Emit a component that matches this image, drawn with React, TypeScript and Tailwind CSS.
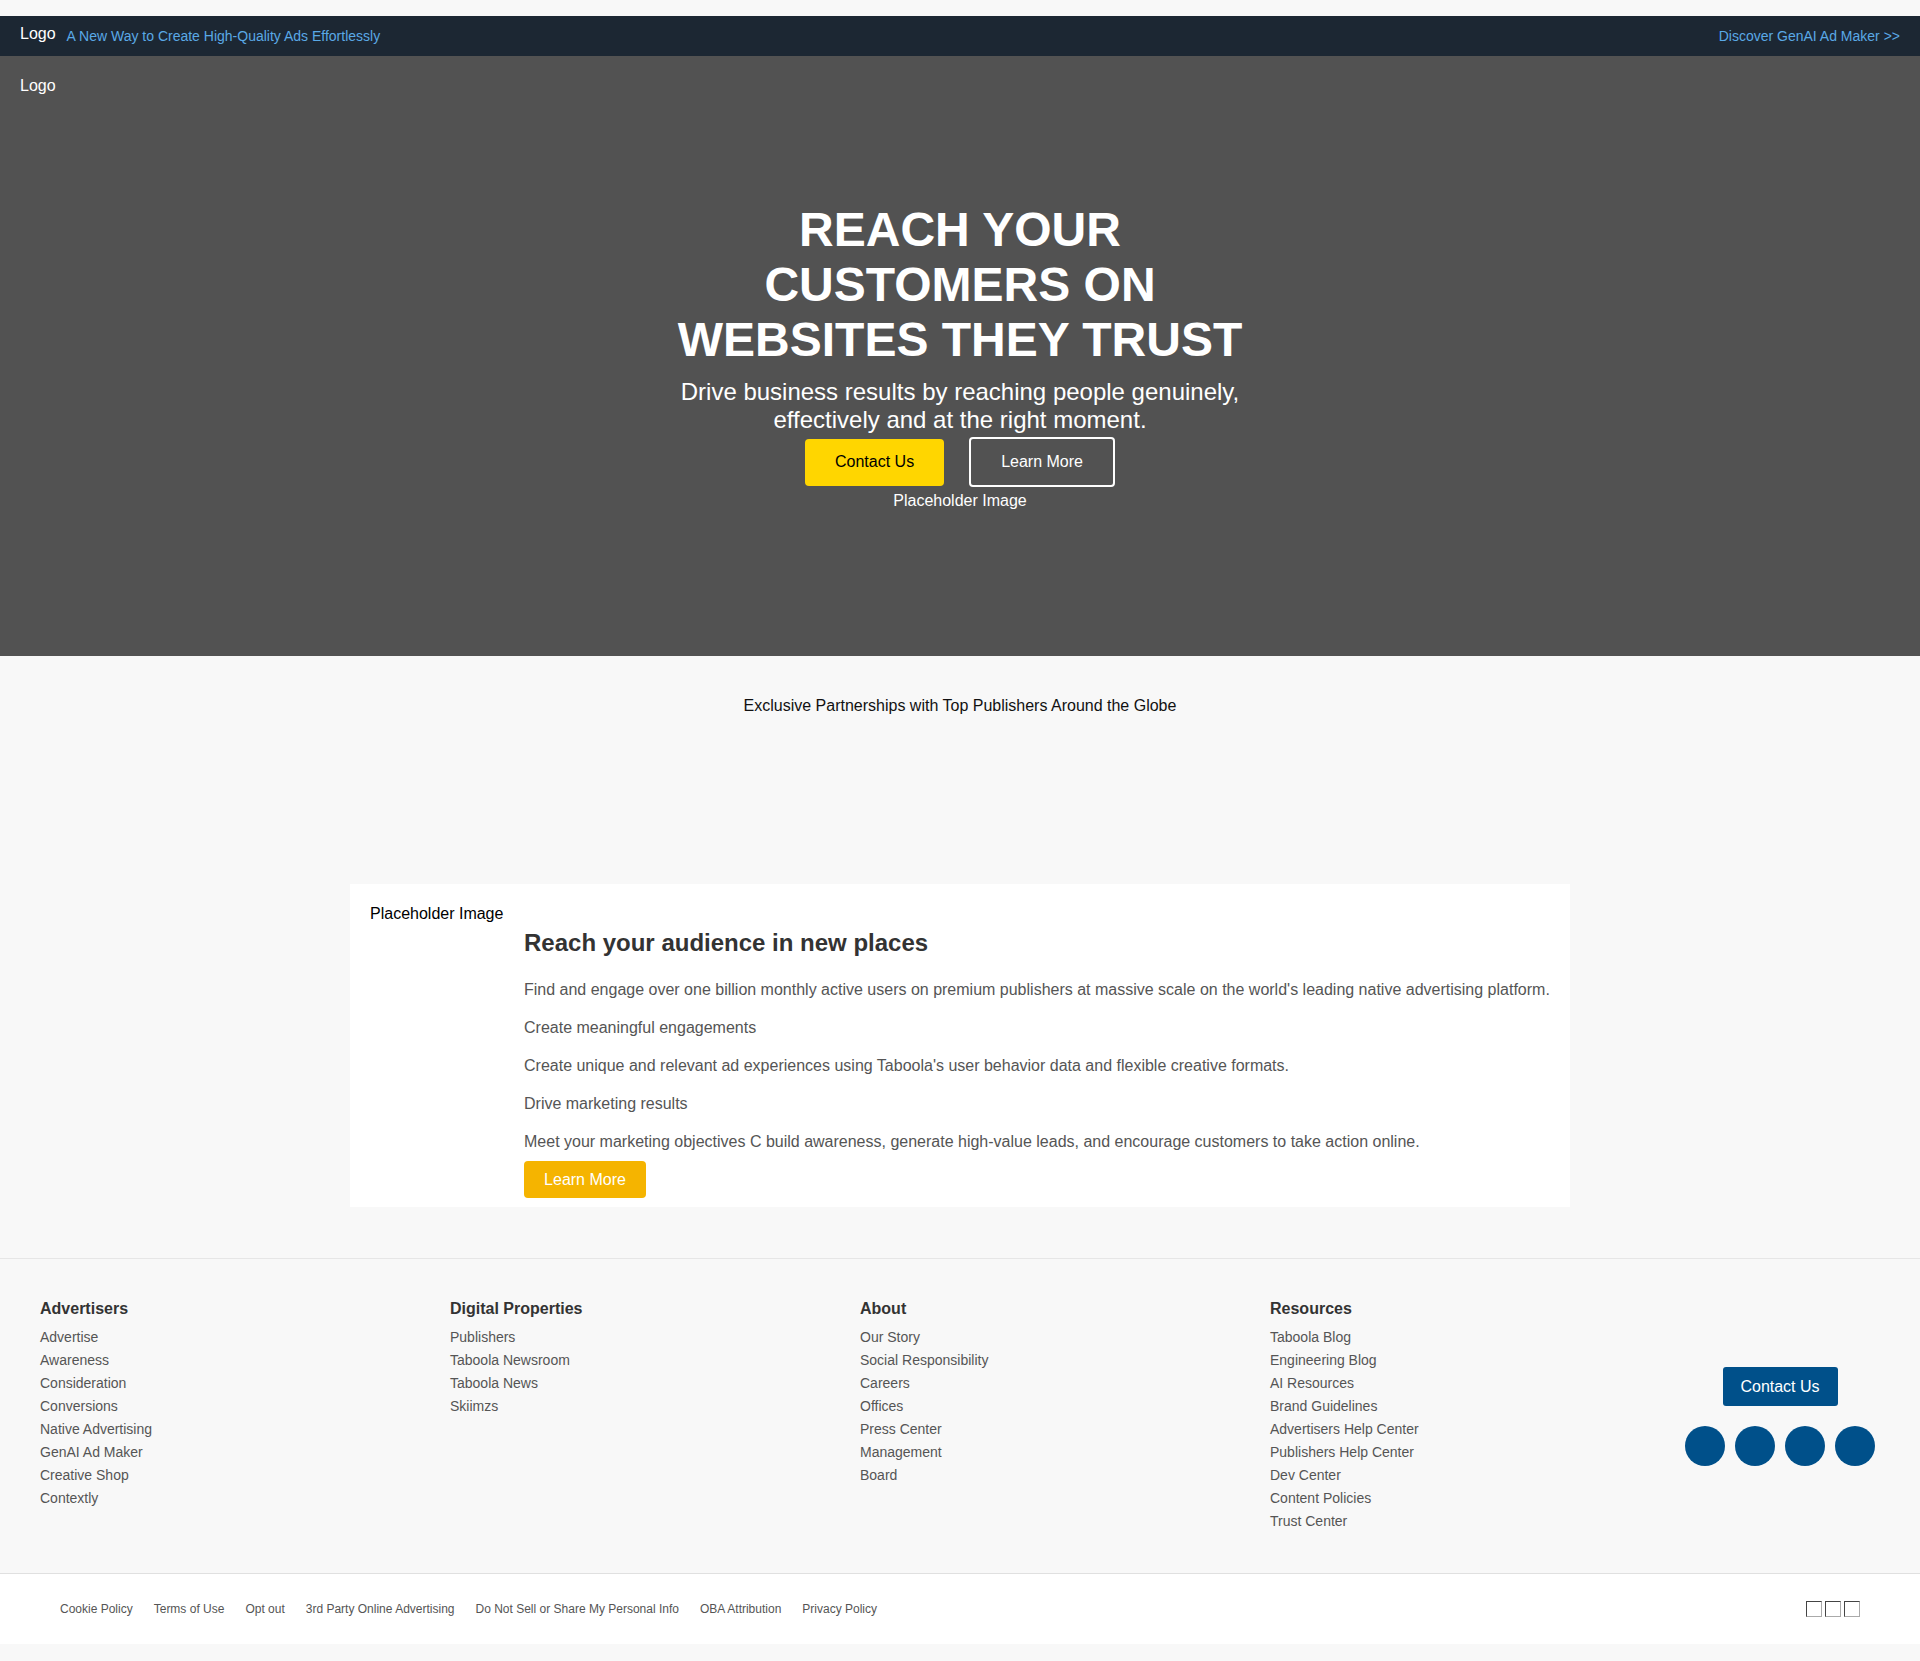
import React from 'react';

const footerColumns = [
  {
    title: 'Advertisers',
    links: ['Advertise', 'Awareness', 'Consideration', 'Conversions', 'Native Advertising', 'GenAI Ad Maker', 'Creative Shop', 'Contextly'],
  },
  {
    title: 'Digital Properties',
    links: ['Publishers', 'Taboola Newsroom', 'Taboola News', 'Skiimzs'],
  },
  {
    title: 'About',
    links: ['Our Story', 'Social Responsibility', 'Careers', 'Offices', 'Press Center', 'Management', 'Board'],
  },
  {
    title: 'Resources',
    links: [
      'Taboola Blog',
      'Engineering Blog',
      'AI Resources',
      'Brand Guidelines',
      'Advertisers Help Center',
      'Publishers Help Center',
      'Dev Center',
      'Content Policies',
      'Trust Center',
    ],
  },
];

const legalLinks = [
  'Cookie Policy',
  'Terms of Use',
  'Opt out',
  '3rd Party Online Advertising',
  'Do Not Sell or Share My Personal Info',
  'OBA Attribution',
  'Privacy Policy',
];

const cardParagraphs = [
  "Find and engage over one billion monthly active users on premium publishers at massive scale on the world's leading native advertising platform.",
  'Create meaningful engagements',
  "Create unique and relevant ad experiences using Taboola's user behavior data and flexible creative formats.",
  'Drive marketing results',
  'Meet your marketing objectives C build awareness, generate high-value leads, and encourage customers to take action online.',
];

export default function App() {
  return (
    <div className="min-h-screen bg-[#f8f8f8] pt-[16px] pb-[16px] font-['Liberation_Sans',Arial,sans-serif]">
      {/* Announcement bar */}
      <div className="h-[40px] bg-[#1c2733] px-[20px] flex items-center justify-between">
        <div className="flex items-center gap-[11px]">
          <span className="text-[16px] text-white -mt-[5px]">Logo</span>
          <a href="#" className="text-[14px] text-[#5aa9e6]">A New Way to Create High-Quality Ads Effortlessly</a>
        </div>
        <a href="#" className="text-[14px] text-[#5aa9e6]">Discover GenAI Ad Maker &gt;&gt;</a>
      </div>

      {/* Hero */}
      <section className="relative h-[600px] bg-[#525252] flex items-center justify-center">
        <header className="absolute top-0 left-0 right-0 px-[20px] pt-[18px]">
          <span className="text-[16px] leading-[18px] text-white">Logo</span>
        </header>
        <div className="max-w-[600px] flex flex-col items-center text-center">
          <h1 className="text-[48px] leading-[55px] font-bold text-white">REACH YOUR CUSTOMERS ON WEBSITES THEY TRUST</h1>
          <p className="mt-[11px] text-[24px] leading-[28px] text-white">
            Drive business results by reaching people genuinely, effectively and at the right moment.
          </p>
          <div className="mt-[3px] flex items-center gap-[25px]">
            <a href="#" className="h-[47px] px-[30px] flex items-center rounded-[4px] bg-[#ffd600] text-[16px] text-black">
              Contact Us
            </a>
            <a href="#" className="h-[50px] px-[30px] flex items-center rounded-[4px] border-2 border-white text-[16px] text-white">
              Learn More
            </a>
          </div>
          <div className="mt-[5px] text-[16px] leading-[18px] text-white">Placeholder Image</div>
        </div>
      </section>

      {/* Partners */}
      <section className="pt-[41px] text-center">
        <p className="text-[16px] leading-[18px] text-[#111]">Exclusive Partnerships with Top Publishers Around the Globe</p>
        <div className="h-[169px]" />
      </section>

      {/* Feature card */}
      <section className="w-[1220px] mx-auto bg-white px-[20px] pt-[21px] pb-[9px] flex gap-[20px]">
        <div className="w-[134px] shrink-0 text-[16px] leading-[18px] text-black">Placeholder Image</div>
        <div className="flex-1 flex flex-col items-start">
          <h2 className="mt-[24px] text-[24px] leading-[28px] font-bold text-[#333]">Reach your audience in new places</h2>
          {cardParagraphs.map((text, i) => (
            <p key={i} className={`${i === 0 ? 'mt-[21px]' : 'mt-[14px]'} text-[16px] leading-[24px] text-[#555]`}>
              {text}
            </p>
          ))}
          <a href="#" className="mt-[7px] h-[37px] w-[122px] flex items-center justify-center rounded-[4px] bg-[#f5b400] text-[16px] text-white">
            Learn More
          </a>
        </div>
      </section>

      {/* Footer */}
      <footer className="mt-[51px] border-t border-[#e6e6e6]">
        <div className="flex px-[40px] pt-[41px] pb-[40px]">
          {footerColumns.map(col => (
            <div key={col.title} className="w-[410px] shrink-0">
              <h3 className="text-[16px] leading-[18px] font-bold text-[#333] mb-[8px]">{col.title}</h3>
              <ul>
                {col.links.map(link => (
                  <li key={link} className="text-[14px] leading-[23px] text-[#555]">
                    <a href="#">{link}</a>
                  </li>
                ))}
              </ul>
            </div>
          ))}
          <div className="flex-1 flex flex-col items-center justify-center gap-[20px]">
            <a href="#" className="h-[39px] w-[115px] flex items-center justify-center rounded-[3px] bg-[#00508a] text-[16px] text-white">
              Contact Us
            </a>
            <div className="flex gap-[10px]">
              {[0, 1, 2, 3].map(i => (
                <a key={i} href="#" className="w-[40px] h-[40px] rounded-full bg-[#00508a]" />
              ))}
            </div>
          </div>
        </div>

        <div className="h-[71px] bg-white border-t border-[#e0e0e0] px-[60px] flex items-center justify-between">
          <nav className="flex gap-[21px]">
            {legalLinks.map(link => (
              <a key={link} href="#" className="text-[12px] text-[#555]">
                {link}
              </a>
            ))}
          </nav>
          <div className="flex gap-[3px]">
            {[0, 1, 2].map(i => (
              <span
                key={i}
                className="w-[16px] h-[16px] border border-l-[#444] border-t-[#444] border-r-[#aaa] border-b-[#aaa]"
              />
            ))}
          </div>
        </div>
      </footer>
    </div>
  );
}
